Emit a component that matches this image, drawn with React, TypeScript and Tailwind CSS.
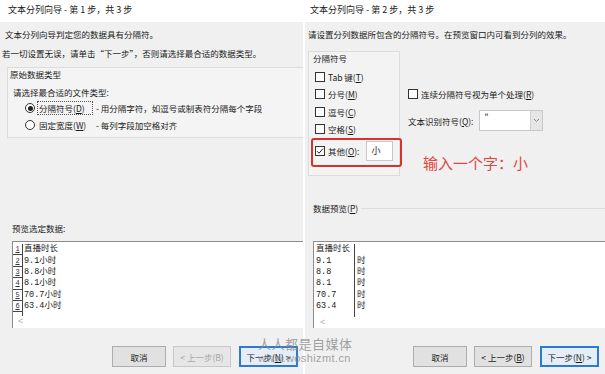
import type { ReactNode } from 'react';

const leftRows = ['直播时长', '9.1小时', '8.8小时', '8.1小时', '70.7小时', '63.4小时'];
const rightRows = [
  ['直播时长', ''],
  ['9.1', '时'],
  ['8.8', '时'],
  ['8.1', '时'],
  ['70.7', '时'],
  ['63.4', '时'],
];

function Check({ checked }: { checked?: boolean }) {
  return (
    <span className="w-[10px] h-[10px] border border-[#333] bg-white flex items-center justify-center shrink-0">
      {checked && (
        <svg width="8" height="8" viewBox="0 0 8 8">
          <path d="M1 4.2 L3 6.2 L7 1.6" fill="none" stroke="#222" strokeWidth="1" />
        </svg>
      )}
    </span>
  );
}

function Radio({ checked }: { checked?: boolean }) {
  return (
    <span className="w-[10px] h-[10px] rounded-full border border-[#333] bg-white flex items-center justify-center shrink-0">
      {checked && <span className="w-[5px] h-[5px] rounded-full bg-[#222]" />}
    </span>
  );
}

function Btn({ children, className }: { children: ReactNode; className: string }) {
  return <div className={`h-[21px] flex items-center justify-center text-[8.5px] leading-[12px] border ${className}`}>{children}</div>;
}

function Buttons({ step }: { step: number }) {
  return (
    <div className="mt-[18px] flex justify-end">
      <Btn className="w-[54px] bg-[#e1e1e1] border-[#adadad]">取消</Btn>
      {step === 1 ? (
        <Btn className="ml-[7px] w-[58px] bg-[#e6e6e6] border-[#c8c8c8] text-[#a6a6a6]">&lt; 上一步(B)</Btn>
      ) : (
        <Btn className="ml-[7px] w-[58px] bg-[#e1e1e1] border-[#adadad]">
          &lt; 上一步(<u>B</u>)
        </Btn>
      )}
      <Btn className="ml-[8px] w-[59px] bg-[#e5eef8] border-2 border-[#2b7bd0]">
        下一步(<u>N</u>) &gt;
      </Btn>
    </div>
  );
}

export default function App() {
  return (
    <div className="relative w-[605px] h-[374px] bg-white flex overflow-hidden text-[#1a1a1a] text-[8.5px] font-['Noto_Sans_CJK_SC',sans-serif]">
      {/* step 1 */}
      <div className="w-[303px] flex flex-col">
        <div className="h-[22px] bg-white pl-[8px] pt-[4px] text-[9px] leading-[12px]">文本分列向导 - 第 1 步，共 3 步</div>
        <div className="flex-1 bg-[#f0f0f0] flex flex-col pr-[5px]">
          <p className="mt-[6px] ml-[5px] leading-[12px]">文本分列向导判定您的数据具有分隔符。</p>
          <p className="mt-[7px] ml-[2px] leading-[12px]">若一切设置无误，请单击“下一步”，否则请选择最合适的数据类型。</p>
          <div className="mt-[8px] ml-[7px] -mr-[5px] h-[71px] border border-r-0 border-[#dcdcdc] bg-[#f4f4f4]">
            <p className="ml-[2px] leading-[12px]">原始数据类型</p>
            <p className="mt-[6px] ml-[5px] leading-[12px]">请选择最合适的文件类型:</p>
            <div className="mt-[2px] ml-[17px] h-[16px] flex items-center">
              <Radio checked />
              <span className="ml-[2px] w-[56px] h-[14px] flex items-center pl-[1px] border border-dotted border-[#555] leading-[12px]">
                分隔符号(<u>D</u>)
              </span>
              <span className="ml-[3px] leading-[12px]">- 用分隔字符，如逗号或制表符分隔每个字段</span>
            </div>
            <div className="mt-[1px] ml-[17px] h-[16px] flex items-center">
              <Radio />
              <span className="ml-[2px] w-[56px] pl-[2px] leading-[12px]">
                固定宽度(<u>W</u>)
              </span>
              <span className="ml-[3px] leading-[12px]">- 每列字段加空格对齐</span>
            </div>
          </div>
          <p className="mt-[84px] ml-[12px] leading-[12px]">预览选定数据:</p>
          <div className="mt-[7px] ml-[12px] -mr-[5px] h-[87px] bg-white border-t border-l border-[#8c8c8c] flex flex-col font-['Liberation_Mono','Noto_Sans_CJK_SC',monospace] text-[8.5px]">
            <div className="pt-[2px]">
              {leftRows.map((r, i) => (
                <div key={i} className="h-[11.4px] flex items-center">
                  <span className="w-[10px] h-full border-r border-b border-[#444] flex items-center justify-center underline text-[7px] leading-[8px] text-[#333]">
                    {i + 1}
                  </span>
                  <span className="ml-[1px] leading-[11px]">{r}</span>
                </div>
              ))}
              <div className="w-[10px] h-[4px] border-r border-[#444]" />
            </div>
            <div className="mt-[1px] ml-[5px] text-[#b0b0b0] text-[9px] leading-[10px]">&lt;</div>
          </div>
          <Buttons step={1} />
        </div>
      </div>

      <div className="w-[2px] bg-white" />

      {/* step 2 */}
      <div className="w-[300px] flex flex-col">
        <div className="h-[22px] bg-white pl-[5px] pt-[4px] text-[9px] leading-[12px]">文本分列向导 - 第 2 步，共 3 步</div>
        <div className="flex-1 bg-[#f0f0f0] flex flex-col pr-[6px]">
          <p className="mt-[6px] ml-[3px] leading-[12px]">请设置分列数据所包含的分隔符号。在预览窗口内可看到分列的效果。</p>
          <div className="mt-[11px] flex">
            <div className="ml-[3px] w-[92px] h-[125px] border border-[#dcdcdc] bg-[#f3f3f3]">
              <p className="ml-[4px] leading-[12px]">分隔符号</p>
              <div className="mt-[4px] pl-[6px]">
                <div className="h-[17.5px] flex items-center">
                  <Check />
                  <span className="ml-[3px] leading-[12px]">
                    Tab 键(<u>T</u>)
                  </span>
                </div>
                <div className="h-[17.5px] flex items-center">
                  <Check />
                  <span className="ml-[3px] leading-[12px]">
                    分号(<u>M</u>)
                  </span>
                </div>
                <div className="h-[17.5px] flex items-center">
                  <Check />
                  <span className="ml-[3px] leading-[12px]">
                    逗号(<u>C</u>)
                  </span>
                </div>
                <div className="h-[17.5px] flex items-center">
                  <Check />
                  <span className="ml-[3px] leading-[12px]">
                    空格(<u>S</u>)
                  </span>
                </div>
              </div>
              <div className="ml-[2px] w-[91px] h-[29px] border-2 border-[#d8322e] rounded-[3px] flex items-center pl-[2px] pb-[4px]">
                <Check checked />
                <span className="ml-[3px] leading-[12px]">
                  其他(<u>O</u>):
                </span>
                <span className="ml-[7px] w-[27px] h-[20px] bg-white border border-[#c8c8c8] flex items-center pl-[4px] text-[9px]">小</span>
              </div>
            </div>
            <div className="ml-[8px] pt-[36px] flex flex-col">
              <div className="h-[14px] flex items-center">
                <Check />
                <span className="ml-[3px] leading-[12px]">
                  连续分隔符号视为单个处理(<u>R</u>)
                </span>
              </div>
              <div className="mt-[9px] h-[21px] flex items-center">
                <span className="leading-[12px]">
                  文本识别符号(<u>Q</u>):
                </span>
                <div className="ml-[6px] w-[64px] h-[21px] bg-white border border-[#c8c8c8] flex">
                  <span className="flex-1 pl-[4px] leading-[10px]">"</span>
                  <span className="w-[12px] bg-[#e6e6e6] border-l border-[#d0d0d0] flex items-center justify-center">
                    <svg width="7" height="5" viewBox="0 0 7 5">
                      <path d="M1 1 L3.5 3.5 L6 1" fill="none" stroke="#888" strokeWidth="1" />
                    </svg>
                  </span>
                </div>
              </div>
              <p className="mt-[23px] ml-[15px] text-[15px] leading-[18px] text-[#e0463f]">输入一个字：小</p>
            </div>
          </div>
          <div className="mt-[26px] ml-[8px] -mr-[6px] flex items-center">
            <span className="leading-[12px]">
              数据预览(<u>P</u>)
            </span>
            <span className="ml-[3px] flex-1 border-t border-[#dcdcdc]" />
          </div>
          <div className="mt-[27px] ml-[8px] -mr-[6px] h-[87px] bg-white border-t border-l border-[#8c8c8c] flex flex-col font-['Liberation_Mono','Noto_Sans_CJK_SC',monospace] text-[8.5px]">
            <div className="pt-[2px] flex">
              <div className="w-[41px] border-r border-[#444] pl-[2px] pb-[5px]">
                {rightRows.map((r, i) => (
                  <div key={i} className="h-[11.4px] leading-[11px] flex items-center">
                    {r[0]}
                  </div>
                ))}
              </div>
              <div className="pl-[2px]">
                {rightRows.map((r, i) => (
                  <div key={i} className="h-[11.4px] leading-[11px] flex items-center">
                    {r[1]}
                  </div>
                ))}
              </div>
            </div>
            <div className="mt-[1px] ml-[6px] text-[#b0b0b0] text-[9px] leading-[10px]">&lt;</div>
          </div>
          <Buttons step={2} />
        </div>
      </div>

      {/* watermark */}
      <div className="absolute left-[258px] top-[336px] text-[#8a8a8a]/80 pointer-events-none">
        <p className="text-[13px] leading-[16px] tracking-[0.5px]">人人都是自媒体</p>
        <p className="text-[11px] leading-[13px] font-['Liberation_Sans',sans-serif] tracking-[0.4px]">www.woshizmt.cn</p>
      </div>
    </div>
  );
}
